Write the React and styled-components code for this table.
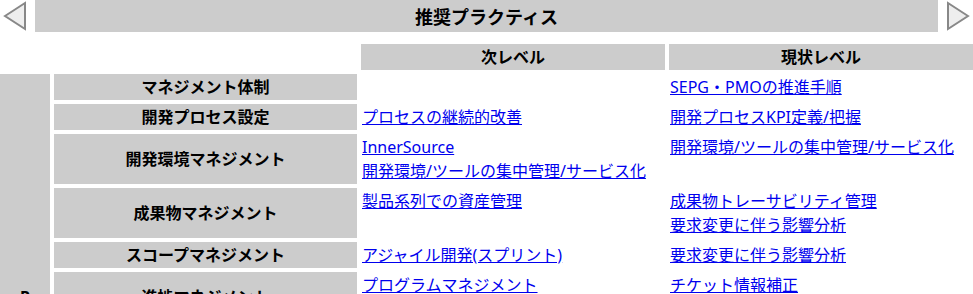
import React from "react";
import styled, { createGlobalStyle } from "styled-components";

const GlobalStyle = createGlobalStyle`
  html, body {
    margin: 0;
    padding: 0;
    overflow: hidden;
    background: #fff;
  }
  body {
    font-family: "Noto Sans", "Noto Sans CJK JP", sans-serif;
    font-size: 16px;
    color: #000;
  }
`;

const rows = [
  {
    label: "マネジメント体制",
    next: [],
    current: ["SEPG・PMOの推進手順"],
  },
  {
    label: "開発プロセス設定",
    next: ["プロセスの継続的改善"],
    current: ["開発プロセスKPI定義/把握"],
  },
  {
    label: "開発環境マネジメント",
    next: ["InnerSource", "開発環境/ツールの集中管理/サービス化"],
    current: ["開発環境/ツールの集中管理/サービス化"],
  },
  {
    label: "成果物マネジメント",
    next: ["製品系列での資産管理"],
    current: ["成果物トレーサビリティ管理", "要求変更に伴う影響分析"],
  },
  {
    label: "スコープマネジメント",
    next: ["アジャイル開発(スプリント)"],
    current: ["要求変更に伴う影響分析"],
  },
  {
    label: "進捗マネジメント",
    next: ["プログラムマネジメント", "EVMによる進捗管理"],
    current: ["チケット情報補正", "進捗の見える化"],
  },
  {
    label: "品質マネジメント",
    next: ["品質の定量管理", "レビュー効率化"],
    current: ["品質基準の策定"],
  },
  {
    label: "リスクマネジメント",
    next: ["リスクの早期検知"],
    current: ["リスク管理表の運用"],
  },
  {
    label: "構成マネジメント",
    next: ["構成管理の自動化", "ブランチ戦略の標準化"],
    current: ["構成管理ツールの導入"],
  },
  {
    label: "要員マネジメント",
    next: ["スキルマップの活用"],
    current: ["要員計画の策定"],
  },
  {
    label: "コストマネジメント",
    next: ["コスト実績の分析"],
    current: ["見積り手法の標準化"],
  },
];

function Arrow({ dir }) {
  const points = dir === "left" ? "5,16 25,3 25,29" : "30,16 10,3 10,29";
  return (
    <svg width="35" height="32" viewBox="0 0 35 32">
      <polygon points={points} fill="#eeeeee" stroke="#888888" strokeWidth="2" strokeLinejoin="miter" />
    </svg>
  );
}

function App() {
  return (
    <Page>
      <GlobalStyle />
      <TitleBar>
        <ArrowButton aria-label="前へ">
          <Arrow dir="left" />
        </ArrowButton>
        <Title>推奨プラクティス</Title>
        <ArrowButton aria-label="次へ">
          <Arrow dir="right" />
        </ArrowButton>
      </TitleBar>
      <Grid>
        <Blank />
        <HeadCell>次レベル</HeadCell>
        <HeadCell>現状レベル</HeadCell>
        <Phase $span={rows.length}>P</Phase>
        {rows.map((row) => (
          <React.Fragment key={row.label}>
            <Label>{row.label}</Label>
            <LinkCell>
              {row.next.map((t) => (
                <div key={t}>
                  <a href="#">{t}</a>
                </div>
              ))}
            </LinkCell>
            <LinkCell>
              {row.current.map((t) => (
                <div key={t}>
                  <a href="#">{t}</a>
                </div>
              ))}
            </LinkCell>
          </React.Fragment>
        ))}
      </Grid>
    </Page>
  );
}

const Page = styled.div`
  width: 973px;
`;

const TitleBar = styled.div`
  display: flex;
  height: 32px;
`;

const ArrowButton = styled.div`
  width: 35px;
  flex: none;
  display: flex;
  cursor: pointer;
  & svg {
    display: block;
  }
`;

const Title = styled.div`
  flex: 1;
  background: #cccccc;
  display: flex;
  align-items: center;
  justify-content: center;
  font-weight: bold;
  font-size: 18px;
`;

const Grid = styled.div`
  display: grid;
  grid-template-columns: 50px 303px 304px 304px;
  gap: 4px;
  margin-top: 12px;
`;

const Blank = styled.div`
  grid-column: span 2;
`;

const HeadCell = styled.div`
  background: #cccccc;
  font-weight: bold;
  text-align: center;
  line-height: 24px;
  padding: 1px;
`;

const Phase = styled.div`
  grid-row: span ${(p) => p.$span};
  background: #cccccc;
  font-weight: bold;
  display: flex;
  align-items: center;
  justify-content: center;
`;

const Label = styled.div`
  background: #cccccc;
  font-weight: bold;
  display: flex;
  align-items: center;
  justify-content: center;
  line-height: 24px;
  padding: 1px;
  min-height: 24px;
`;

const LinkCell = styled.div`
  padding: 1px;
  line-height: 24px;
  & a {
    color: #0000ee;
  }
`;

export default App;
